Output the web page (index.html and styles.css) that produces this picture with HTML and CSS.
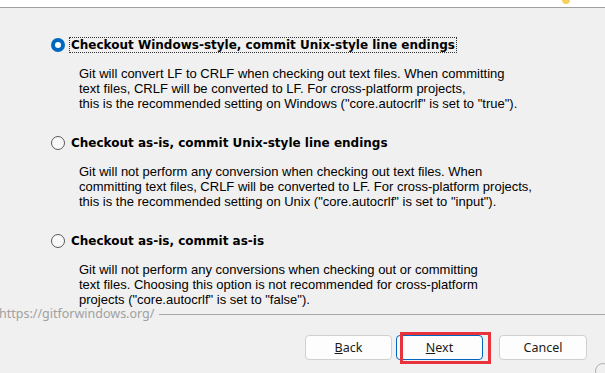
FILE: index.html
```html
<!DOCTYPE html>
<html lang="en">
<head>
    <meta charset="UTF-8">
    <meta name="viewport" content="width=device-width, initial-scale=1.0">
    <title>Git Setup - Line Endings</title>
    <link rel="stylesheet" href="styles.css">
</head>
<body>

<div class="titlebar">
    <span class="logo-dot"></span>
</div>

<div class="options">
    <div class="option">
        <div class="option-head">
            <span class="radio checked"></span>
            <span class="label focused">Checkout Windows-style, commit Unix-style line endings</span>
        </div>
        <p class="desc">Git will convert LF to CRLF when checking out text files. When committing<br>text files, CRLF will be converted to LF. For cross-platform projects,<br>this is the recommended setting on Windows ("core.autocrlf" is set to "true").</p>
    </div>

    <div class="option">
        <div class="option-head">
            <span class="radio"></span>
            <span class="label">Checkout as-is, commit Unix-style line endings</span>
        </div>
        <p class="desc">Git will not perform any conversion when checking out text files. When<br>committing text files, CRLF will be converted to LF. For cross-platform projects,<br>this is the recommended setting on Unix ("core.autocrlf" is set to "input").</p>
    </div>

    <div class="option">
        <div class="option-head">
            <span class="radio"></span>
            <span class="label">Checkout as-is, commit as-is</span>
        </div>
        <p class="desc">Git will not perform any conversions when checking out or committing<br>text files. Choosing this option is not recommended for cross-platform<br>projects ("core.autocrlf" is set to "false").</p>
    </div>
</div>

<div class="footer-line">
    <span class="url">https://gitforwindows.org/</span>
    <span class="rule"></span>
</div>

<div class="buttons">
    <button class="btn"><u>B</u>ack</button>
    <span class="next-wrap">
        <button class="btn default"><u>N</u>ext</button>
        <span class="highlight"></span>
    </span>
    <button class="btn cancel">Cancel</button>
</div>

<span class="corner"></span>

</body>
</html>
```

FILE: styles.css
```css
body {
    font-family: 'Noto Sans', 'Open Sans', sans-serif;
    font-size: 12px;
    background-color: #f0f0f0;
    color: #000;
    margin: 0;
    padding: 0;
    width: 605px;
    height: 373px;
    overflow: hidden;
    position: relative;
}

.titlebar {
    height: 7px;
    background-color: #fff;
    border-bottom: 1px solid #a0a0a0;
    position: relative;
}

.logo-dot {
    position: absolute;
    top: -4px;
    left: 562px;
    width: 8px;
    height: 8px;
    border-radius: 50%;
    background-color: #f7d25a;
}

.options {
    padding: 29px 0 0 51px;
}

.option {
    margin-bottom: 24px;
}

.option:last-child {
    margin-bottom: 0;
}

.option-head {
    display: flex;
    align-items: center;
    height: 16px;
}

.radio {
    width: 12px;
    height: 12px;
    border: 1px solid #5a5a5a;
    border-radius: 50%;
    background-color: #f8f8f8;
    margin-right: 4px;
    flex-shrink: 0;
}

.radio.checked {
    width: 6px;
    height: 6px;
    border: 4px solid #0067c0;
    background-color: #fff;
}

.label {
    font-family: 'DejaVu Sans', 'Noto Sans', sans-serif;
    font-weight: bold;
    font-size: 12px;
    line-height: 14px;
    padding: 0 1px;
    border: 1px solid transparent;
}

.label.focused {
    border: 1px dotted #333;
}

.desc {
    font-family: 'Liberation Sans', Arial, sans-serif;
    margin: 13px 0 0 28px;
    line-height: 15px;
    font-size: 13px;
}

.footer-line {
    display: flex;
    align-items: center;
    margin-top: 0;
    height: 14px;
}

.url {
    color: #a0a0a0;
    font-size: 12.5px;
    line-height: 14px;
    margin-left: -1px;
}

.rule {
    flex: 1;
    height: 0;
    border-top: 1px solid #a8a8a8;
    margin-left: 5px;
}

.buttons {
    display: flex;
    justify-content: flex-end;
    padding: 14px 18px 0 0;
}

.btn {
    font-family: 'Noto Sans', 'Open Sans', sans-serif;
    font-size: 12.5px;
    width: 87px;
    height: 25px;
    background-color: #fdfdfd;
    border: 1px solid #d0d0d0;
    border-radius: 4px;
    color: #1a1a1a;
    padding: 0;
}

.btn u {
    text-decoration-thickness: 1px;
}

.next-wrap {
    position: relative;
    margin-left: 4px;
}

.btn.default {
    border: 1px solid #0067c0;
}

.highlight {
    position: absolute;
    left: 4px;
    top: -3px;
    width: 85px;
    height: 26px;
    border: 3px solid #e8323c;
}

.cancel {
    margin-left: 16px;
    width: 88px;
}

.corner {
    position: absolute;
    right: -6px;
    bottom: -6px;
    width: 14px;
    height: 14px;
    border: 1px solid #b0b0b0;
    border-radius: 8px;
}
```
